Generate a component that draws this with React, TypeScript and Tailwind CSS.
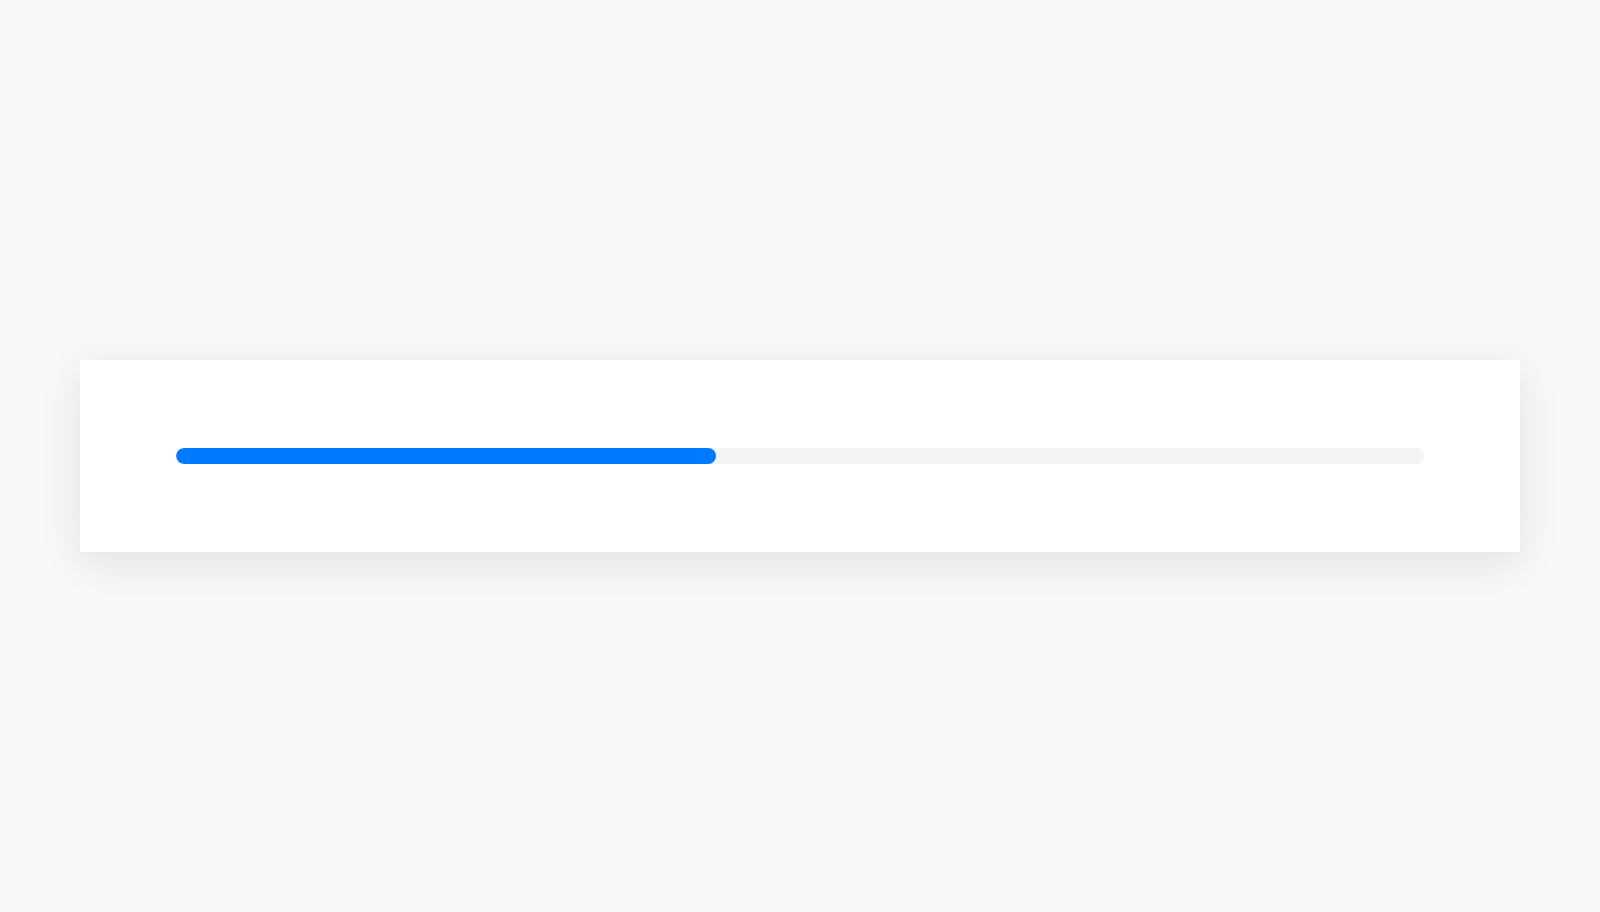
export default function App() {
  return (
    <div className="min-h-screen w-full bg-[#f8f8f8] flex items-center justify-center">
      <div className="w-[1440px] bg-white px-24 py-[88px] shadow-[0_10px_40px_rgba(0,0,0,0.09)]">
        <div className="h-4 w-full rounded-full bg-[#f3f4f4] overflow-hidden">
          <div className="h-full w-[43.3%] rounded-full bg-[#007bff]" />
        </div>
      </div>
    </div>
  )
}
